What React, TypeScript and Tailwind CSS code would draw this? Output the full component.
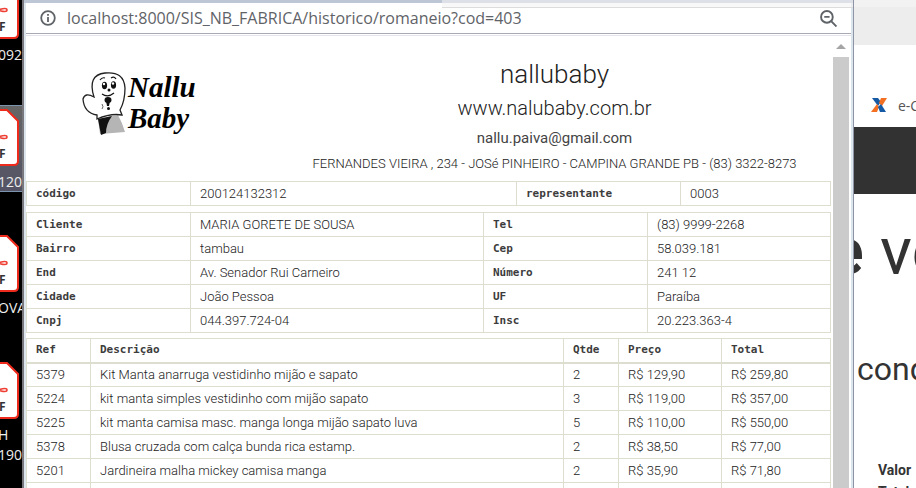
import type { ReactNode } from "react";

const client = [
  ["Cliente", "MARIA GORETE DE SOUSA", "Tel", "(83) 9999-2268"],
  ["Bairro", "tambau", "Cep", "58.039.181"],
  ["End", "Av. Senador Rui Carneiro", "Número", "241 12"],
  ["Cidade", "João Pessoa", "UF", "Paraíba"],
  ["Cnpj", "044.397.724-04", "Insc", "20.223.363-4"],
];

const items = [
  ["5379", "Kit Manta anarruga vestidinho mijão e sapato", "2", "R$ 129,90", "R$ 259,80"],
  ["5224", "kit manta simples vestidinho com mijão sapato", "3", "R$ 119,00", "R$ 357,00"],
  ["5225", "kit manta camisa masc. manga longa mijão sapato luva", "5", "R$ 110,00", "R$ 550,00"],
  ["5378", "Blusa cruzada com calça bunda rica estamp.", "2", "R$ 38,50", "R$ 77,00"],
  ["5201", "Jardineira malha mickey camisa manga", "2", "R$ 35,90", "R$ 71,80"],
  ["", "", "", "", ""],
];

function Th({ children }: { children: ReactNode }) {
  return (
    <th className="h-6 border border-[#deded0] px-[9px] py-0 text-left font-['DejaVu_Sans_Mono',monospace] text-[11px] leading-5 font-bold text-[#3c3c3c]">
      {children}
    </th>
  );
}

function Td({ children }: { children: ReactNode }) {
  return (
    <td className="h-6 border border-[#deded0] px-[9px] py-0 text-[13px] leading-5 font-light whitespace-nowrap">
      {children}
    </td>
  );
}

function PdfFile({ lines, selected = false }: { lines: string[]; selected?: boolean }) {
  return (
    <div className={selected ? "h-[87px] border-y border-[#7c93ad] bg-gradient-to-b from-[#666] to-[#535365]" : "h-[87px]"}>
      <svg viewBox="0 0 22 62" className="block h-[62px] w-[22px]" fill="none">
        <path d="M-5 4H7L18 15V55Q18 59 14 59H-5Z" fill="#fff" stroke="#ee2a1c" strokeWidth="2" />
        <path d="M-2 31Q7 28 7 31T-2 31" stroke="#ee4035" strokeWidth="1.5" />
        <text x="-1" y="52" fill="#333" fontFamily="Open Sans, sans-serif" fontSize="12" fontWeight="700">F</text>
      </svg>
      {lines.map((l) => (
        <p key={l} className="-ml-0.5 h-5 font-['Open_Sans',sans-serif] text-[14px] leading-7 whitespace-nowrap text-[#eee]">
          {l}
        </p>
      ))}
    </div>
  );
}

function Logo() {
  return (
    <div className="flex" role="img" aria-label="Nallu Baby">
      <svg viewBox="0 0 46 70" className="h-[70px] w-[46px] shrink-0" fill="none">
        <path d="M16 49 36 45Q40 52 43 62L18 64Z" fill="#b5b5b5" />
        <path d="M16 49 30 46Q24 54 24 63L19 65Z" fill="#111" />
        <path d="M15 45Q2 43 1 29Q3 22 12 27Q5 5 23 3Q42 1 43 18Q43 31 38 40L40 45Q29 43 15 49Z" fill="#fff" stroke="#222" strokeWidth="1.3" />
        <ellipse cx="22.500" cy="15.500" rx="2.600" ry="3.800" fill="#111" />
        <ellipse cx="31.500" cy="15" rx="2.600" ry="3.800" fill="#111" />
        <circle cx="22" cy="14" r="1.200" fill="#fff" />
        <circle cx="31" cy="13.500" r="1.200" fill="#fff" />
        <path d="M18 10q2-3 5-2M29 8q3-2 5 1M20 24q6 4 12-1" stroke="#111" strokeWidth="1.2" />
        <circle cx="27" cy="20" r="1.500" fill="#111" />
        <ellipse cx="26" cy="30" rx="3.500" ry="3" fill="#111" />
        <path d="M24 31h4l-1 5h-2z" fill="#111" />
        <circle cx="26.500" cy="38.500" r="1.500" fill="#111" />
        <path d="M20 34q2 3 0 5" stroke="#666" />
      </svg>
      <p className="pt-0.5 font-['Liberation_Serif',serif] text-[29px] leading-[31px] font-bold text-black italic">
        Nallu
        <br />
        Baby
      </p>
    </div>
  );
}

export default function App() {
  return (
    <div className="flex h-screen overflow-hidden bg-white font-['Roboto',sans-serif] text-[#222]">
      <aside className="flex w-[22px] shrink-0 flex-col gap-10 overflow-hidden bg-black">
        <div className="-mt-[21px]">
          <PdfFile lines={["092"]} />
        </div>
        <div className="-mt-px">
          <PdfFile lines={["120"]} selected />
        </div>
        <PdfFile lines={["OVAI"]} />
        <PdfFile lines={["H", "1902"]} />
      </aside>

      <main className="relative flex min-w-0 flex-1 flex-col border-r border-l-2 border-r-[#8c94a6] border-l-[#77777d]">
        <div className="absolute top-0 right-0 left-[418px] h-2 border-b border-[#dcdcdc] bg-[#f4f4f4]/60" />
        <div className="h-[3px] shrink-0 bg-[#bcc6d4]" />
        <div className="flex min-h-0 flex-1 flex-col border-r-2 border-l-2 border-[#dce5ec]">
          <form className="flex h-[31px] shrink-0 items-center border-b border-[#a9a9b3] pr-[14px] pl-[14px]" onSubmit={(e) => e.preventDefault()}>
            <svg viewBox="0 0 16 16" className="size-4 shrink-0" fill="none" stroke="#5f6368" strokeWidth="1.8">
              <circle cx="8" cy="8" r="6.800" />
              <path d="M8 7v5M8 4v1.700" />
            </svg>
            <input
              aria-label="Endereço"
              defaultValue="localhost:8000/SIS_NB_FABRICA/historico/romaneio?cod=403"
              className="ml-[11px] min-w-0 flex-1 font-['Open_Sans',sans-serif] text-[16px] text-[#5f6368] outline-none"
            />
            <button type="button" aria-label="Zoom">
              <svg viewBox="0 0 16 16" className="size-[17px]" fill="none" stroke="#5f6368" strokeWidth="1.8">
                <circle cx="6.500" cy="6.500" r="5.500" />
                <path d="M4 6.500h5M10.500 10.500 15.500 15.500" />
              </svg>
            </button>
          </form>

          <div className="mt-px flex min-h-0 flex-1 border-t border-[#e3e5ea]">
            <div className="min-w-0 flex-1 overflow-hidden pr-0.5">
              <header className="flex h-[145px]">
                <div className="w-[252px] shrink-0 pt-[34px] pl-[56px]">
                  <Logo />
                </div>
                <div className="flex flex-1 flex-col items-center font-light">
                  <h1 className="mt-5 text-[26px] leading-9">nallubaby</h1>
                  <p className="text-[20px] leading-8">www.nalubaby.com.br</p>
                  <p className="text-[15px] leading-7 font-normal text-[#444]">nallu.paiva@gmail.com</p>
                  <p className="text-[13px] leading-6 whitespace-nowrap">FERNANDES VIEIRA , 234 - JOSé PINHEIRO - CAMPINA GRANDE PB - (83) 3322-8273</p>
                </div>
              </header>

              <table className="w-full table-fixed border-collapse">
                <colgroup>
                  <col className="w-[164px]" />
                  <col />
                  <col className="w-[164px]" />
                  <col className="w-[150px]" />
                </colgroup>
                <tbody>
                  <tr>
                    <Th>código</Th>
                    <Td>200124132312</Td>
                    <Th>representante</Th>
                    <Td>0003</Td>
                  </tr>
                </tbody>
              </table>

              <table className="mt-1.5 w-full table-fixed border-collapse">
                <colgroup>
                  <col className="w-[164px]" />
                  <col />
                  <col className="w-[164px]" />
                  <col className="w-[183px]" />
                </colgroup>
                <tbody>
                  {client.map(([a, b, c, d]) => (
                    <tr key={a}>
                      <Th>{a}</Th>
                      <Td>{b}</Td>
                      <Th>{c}</Th>
                      <Td>{d}</Td>
                    </tr>
                  ))}
                </tbody>
              </table>

              <table className="mt-[5px] w-full table-fixed border-collapse">
                <colgroup>
                  <col className="w-16" />
                  <col />
                  <col className="w-[55px]" />
                  <col className="w-[103px]" />
                  <col className="w-[109px]" />
                </colgroup>
                <thead className="border-b-2 border-[#deded0]">
                  <tr>
                    <Th>Ref</Th>
                    <Th>Descrição</Th>
                    <Th>Qtde</Th>
                    <Th>Preço</Th>
                    <Th>Total</Th>
                  </tr>
                </thead>
                <tbody>
                  {items.map((row) => (
                    <tr key={row[0]}>
                      {row.map((cell, i) => (
                        <Td key={i}>{cell}</Td>
                      ))}
                    </tr>
                  ))}
                </tbody>
              </table>
            </div>
            <div className="flex w-[18px] shrink-0 flex-col items-center pr-0.5">
              <svg viewBox="0 0 10 5" className="my-2 h-[5px] w-[10px]">
                <path d="M5 0 10 5H0Z" fill="#a5a5a5" />
              </svg>
              <div className="w-full flex-1 bg-[#cbcbcb]" />
            </div>
          </div>
        </div>
      </main>

      <aside className="w-[62px] shrink-0 overflow-hidden whitespace-nowrap text-[#333]">
        <div className="h-[45px] border-t-[7px] border-[#f2f2f2] bg-[#ededed]" />
        <div className="flex h-[82px] items-center gap-[11px] pt-[38px] pl-[17px]">
          <svg viewBox="0 0 16 14" className="h-[14px] w-4 shrink-0">
            <path d="M1 0h6l3 4-3 4Z" fill="#1659a5" />
            <path d="M16 0h-6L8 5l3 3Z" fill="#f36f21" />
            <path d="M0 14h6l2-5-2-3Z" fill="#f36f21" />
            <path d="M15 14H9L7 9l3-3Z" fill="#1659a5" />
          </svg>
          <span className="font-['Open_Sans',sans-serif] text-[14px] text-[#555]">e-Cac</span>
        </div>
        <div className="h-[67px] bg-[#323232]" />
        <h2 className="-ml-[26px] pt-[18px] text-[66px] leading-[80px]"><b>e</b> venda</h2>
        <p className="pt-[57px] pl-[3px] text-[32px] leading-10">condição</p>
        <dl className="pt-[70px] pl-6 text-[14px] leading-[22px] font-bold">
          <dt>Valor</dt>
          <dt>Total</dt>
        </dl>
      </aside>
    </div>
  );
}
